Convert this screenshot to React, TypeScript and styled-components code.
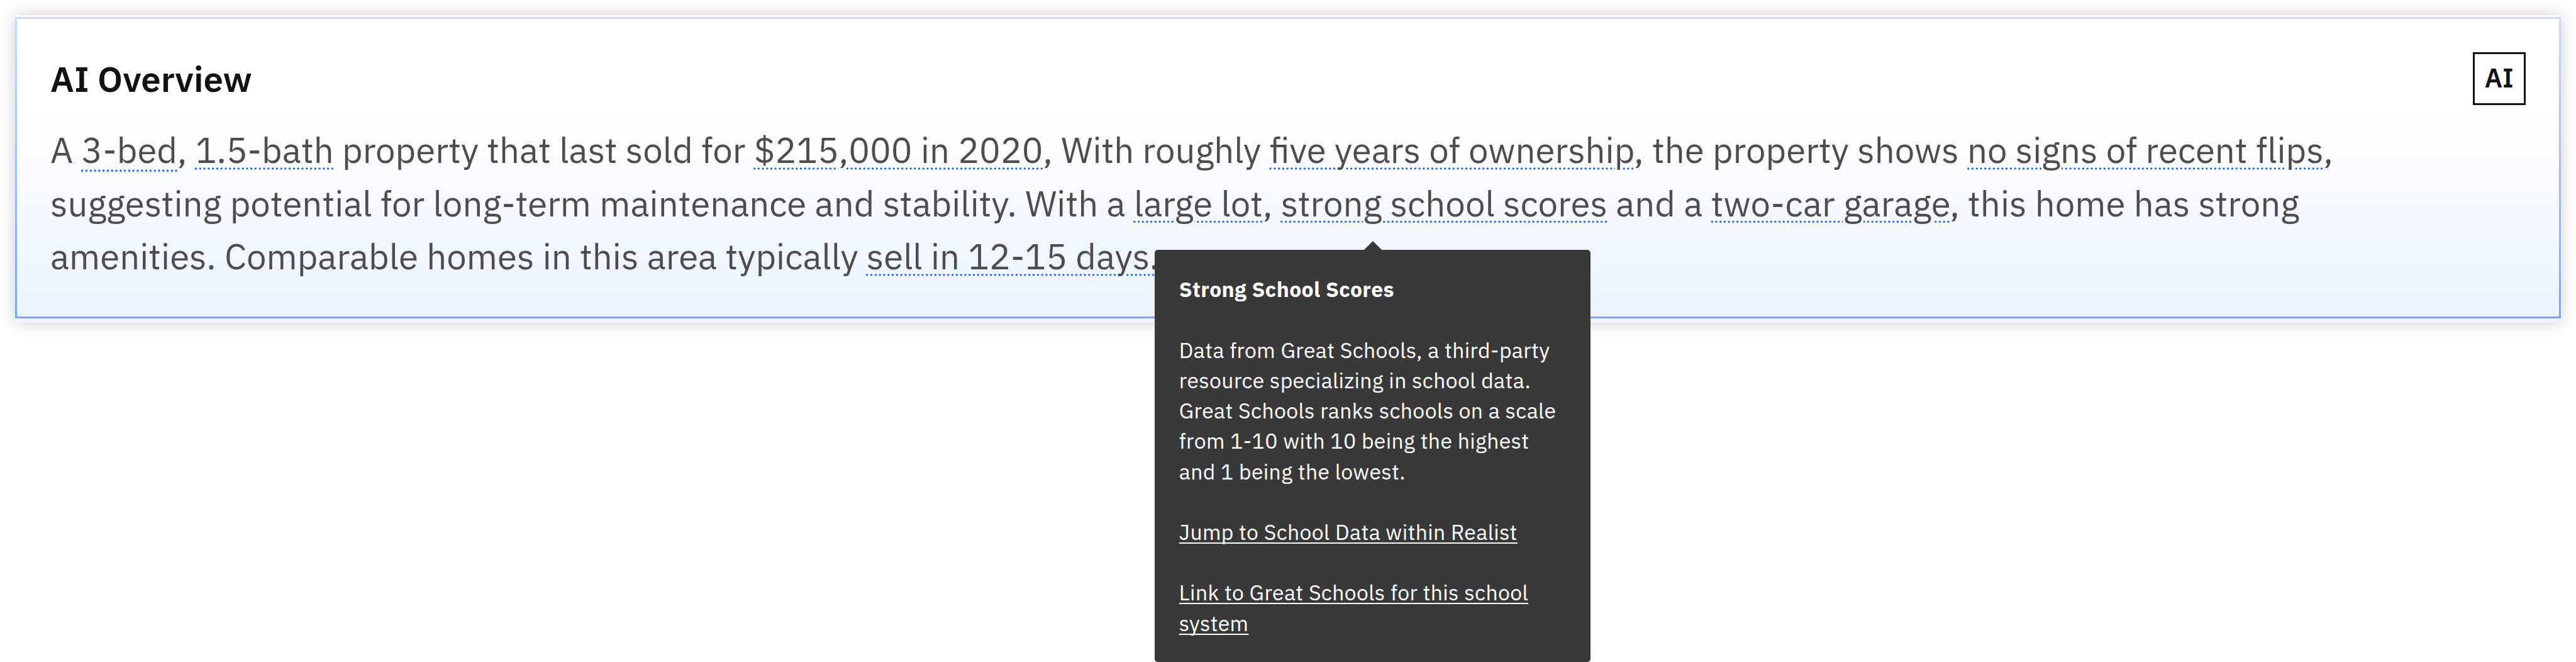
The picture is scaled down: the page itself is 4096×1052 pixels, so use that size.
import React from 'react'
import { createGlobalStyle, styled } from 'styled-components'

const colors = {
  heading: '#121212',
  text: '#4d4d4d',
  link: '#0f62fe',
  frameStart: '#c5daff',
  frameEnd: '#76a6ff',
  tooltip: '#393939',
  white: '#ffffff',
}

type TermProps = {
  $offset?: number
}

const App = () => {
  return (
    <Page>
      <GlobalStyle />
      <Card>
        <Frame>
          <Header>
            <Title>{`AI Overview`}</Title>
            <Badge>{`AI`}</Badge>
          </Header>
          <Summary>
            A <Term $offset={12}>3-bed</Term>, <Term>1.5-bath</Term> property that last sold for{' '}
            <Term>$215,000 in 2020</Term>, With roughly <Term>five years of ownership</Term>, the
            property shows <Term>no signs of recent flips</Term>, suggesting potential for long-term
            maintenance and stability. With a <Term>large lot</Term>,{' '}
            <Term>strong school scores</Term> and a <Term>two-car garage</Term>, this home has strong
            amenities. Comparable homes in this area typically <Term>sell in 12-15 days.</Term>
          </Summary>
        </Frame>
      </Card>
      <Tooltip>
        <TooltipTitle>{`Strong School Scores`}</TooltipTitle>
        <TooltipText>
          Data from Great Schools, a third-party resource specializing in school data. Great Schools
          ranks schools on a scale from 1-10 with 10 being the highest and 1 being the lowest.
        </TooltipText>
        <TooltipText>
          <TooltipLink href="#">{`Jump to School Data within Realist`}</TooltipLink>
        </TooltipText>
        <TooltipText>
          <TooltipLink href="#">{`Link to Great Schools for this school system`}</TooltipLink>
        </TooltipText>
      </Tooltip>
    </Page>
  )
}

const GlobalStyle = createGlobalStyle`
  * {
    box-sizing: border-box;
  }
  body {
    margin: 0;
    background: ${colors.white};
    font-family: "IBM Plex Sans", "Open Sans", "Noto Sans", sans-serif;
  }
  h2, h3, p {
    margin: 0;
  }
`;

const Page = styled.div`
  position: relative;
  height: 1052px;
  padding: 24px;
  overflow: hidden;
`;

const Card = styled.section`
  padding: 3px 0 7px;
  background: linear-gradient(to bottom, #ffffff 30%, #edf4ff 93%);
  box-shadow: 0 0 24px rgba(0, 0, 0, 0.2);
`;

const Frame = styled.div`
  display: flex;
  flex-direction: column;
  gap: 28.8px;
  height: 478.7px;
  padding: 52.8px 53.1px;
  border: 3px solid;
  border-image: linear-gradient(to bottom, ${colors.frameStart}, ${colors.frameEnd}) 1;
`;

const Header = styled.div`
  display: flex;
  justify-content: space-between;
  align-items: flex-start;
`;

const Title = styled.h2`
  font-size: 56.36px;
  font-weight: 600;
  line-height: 84.5px;
  color: ${colors.heading};
`;

const Badge = styled.div`
  display: flex;
  align-items: center;
  justify-content: center;
  width: 84.4px;
  height: 84.4px;
  padding-bottom: 3px;
  border: 3.4px solid ${colors.heading};
  font-size: 42px;
  font-weight: 600;
  color: ${colors.heading};
`;

const Summary = styled.p`
  width: 4320px;
  font-size: 66.7px;
  line-height: 100px;
  color: ${colors.text};
  transform: scale(0.845);
  transform-origin: 0 0;
`;

const Term = styled.span<TermProps>`
  text-decoration: underline dotted ${colors.link} 4px;
  text-underline-offset: ${({ $offset = 8.2 }) => $offset}px;
`;

const Tooltip = styled.aside`
  position: absolute;
  top: 396.9px;
  left: 1836.3px;
  display: flex;
  flex-direction: column;
  gap: 48.2px;
  width: 693px;
  height: 655.1px;
  padding: 38.5px;
  border-radius: 5px;
  background: ${colors.tooltip};
  color: ${colors.white};
  font-size: 33.73px;
  line-height: 48.2px;
  letter-spacing: 0.385px;
  &::before {
    content: "";
    position: absolute;
    top: -14.3px;
    left: 50%;
    margin-left: -14.3px;
    border: 14.3px solid transparent;
    border-top: none;
    border-bottom-color: ${colors.tooltip};
  }
`;

const TooltipTitle = styled.h3`
  font-size: inherit;
  font-weight: 700;
`;

const TooltipText = styled.p`
  font-weight: 400;
`;

const TooltipLink = styled.a`
  color: inherit;
  text-decoration: underline;
  text-decoration-thickness: 2.2px;
  text-decoration-skip-ink: none;
  text-underline-offset: 4px;
`;

export default App
